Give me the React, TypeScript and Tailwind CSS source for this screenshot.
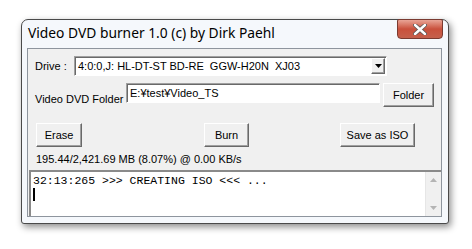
import React from "react";

const raised =
  "border border-t-white border-l-white border-r-[#696969] border-b-[#696969] shadow-[inset_-1px_-1px_0_#a0a0a0] bg-[#f0f0f0]";
const sunken =
  "border border-t-[#a0a0a0] border-l-[#a0a0a0] border-r-white border-b-white shadow-[inset_1px_1px_0_#696969] bg-white";

const Btn: React.FC<{ label: string; className?: string }> = ({ label, className = "" }) => (
  <div className={`${raised} h-[24px] flex items-center justify-center text-[11px] text-black ${className}`}>
    {label}
  </div>
);

const App: React.FC = () => {
  return (
    <div className="w-[472px] h-[249px] bg-white overflow-hidden font-['Liberation_Sans',Arial,sans-serif]">
      {/* window */}
      <div className="relative ml-[21px] mt-[19px] w-[428px] h-[205px] rounded-t-[7px] rounded-b-[3px] border border-[#4a4a4a] bg-[#f5f8fc] shadow-[2px_3px_7px_rgba(0,0,0,0.45)] flex flex-col">
        {/* title bar */}
        <div className="h-[28px] flex items-center pl-[6px] pb-[2px]">
          <span className="font-['Noto_Sans',sans-serif] text-[13.8px] text-black">Video DVD burner 1.0 (c) by Dirk Paehl</span>
        </div>
        <div className="absolute -top-px right-[5px] w-[46px] h-[20px] rounded-b-[4px] rounded-t-[2px] border border-[#7a3a30] bg-gradient-to-b from-[#e8a496] via-[#c9503c] to-[#c5604c] flex items-center justify-center">
          <svg width="14" height="11" viewBox="0 0 14 11">
            <path d="M2 1 L12 10 M12 1 L2 10" stroke="#555" strokeWidth="4" strokeLinecap="round" />
            <path d="M2 1 L12 10 M12 1 L2 10" stroke="#fff" strokeWidth="2.4" strokeLinecap="round" />
          </svg>
        </div>

        {/* client area */}
        <div className="mx-[5px] w-[415px] h-[169px] border border-[#8e959e] bg-[#f0f0f0] flex flex-col">
          {/* drive row */}
          <div className="flex items-center mt-[7px] h-[20px]">
            <span className="ml-[7px] w-[39px] text-[11px] text-black">Drive :</span>
            <div className={`${sunken} w-[313px] h-[20px] flex items-center justify-between pl-[3px] pr-[1px]`}>
              <span className="text-[11px] text-black whitespace-pre">4:0:0,J: HL-DT-ST BD-RE  GGW-H20N  XJ03</span>
              <div className={`${raised} w-[14px] h-[16px] flex items-center justify-center`}>
                <svg width="7" height="4" viewBox="0 0 7 4">
                  <path d="M0 0 H7 L3.5 4 Z" fill="#000" />
                </svg>
              </div>
            </div>
          </div>

          {/* folder row */}
          <div className="flex items-start mt-[7px] h-[24px]">
            <span className="ml-[7px] w-[91px] mt-[8px] text-[11px] text-black">Video DVD Folder</span>
            <div className={`${sunken} w-[254px] h-[20px] flex items-center pl-[3px]`}>
              <span className="text-[11px] text-black">E:¥test¥Video_TS</span>
            </div>
            <Btn label="Folder" className="ml-[3px] w-[51px]" />
          </div>

          {/* buttons */}
          <div className="flex items-center mt-[16px] h-[24px]">
            <Btn label="Erase" className="ml-[8px] w-[46px]" />
            <Btn label="Burn" className="ml-[122px] w-[45px]" />
            <Btn label="Save as ISO" className="ml-[91px] w-[75px]" />
          </div>

          {/* status */}
          <div className="ml-[8px] mt-[5px] h-[14px] flex items-center text-[11px] text-black">
            195.44/2,421.69 MB (8.07%) @ 0.00 KB/s
          </div>

          {/* log */}
          <div className="mt-[4px] ml-px mr-0 flex-1 flex border-t-2 border-l-2 border-t-[#8a8a8a] border-l-[#8a8a8a] bg-white">
            <div className="flex-1 pl-[2px] pt-[2px] font-['Liberation_Mono',monospace] text-[11.5px] leading-[13px] text-black">
              <div className="whitespace-pre">32:13:265 &gt;&gt;&gt; CREATING ISO &lt;&lt;&lt; ...</div>
              <div className="w-[2px] h-[13px] bg-black mt-px" />
            </div>
            <div className="w-[16px] bg-[#f0f0f0] border-l border-[#e6e6e6] flex flex-col items-center justify-between py-[6px]">
              <svg width="7" height="4" viewBox="0 0 7 4">
                <path d="M0 4 H7 L3.5 0 Z" fill="#b4b4b4" />
              </svg>
              <svg width="7" height="4" viewBox="0 0 7 4">
                <path d="M0 0 H7 L3.5 4 Z" fill="#b4b4b4" />
              </svg>
            </div>
          </div>
        </div>
      </div>
    </div>
  );
};

export default App;
